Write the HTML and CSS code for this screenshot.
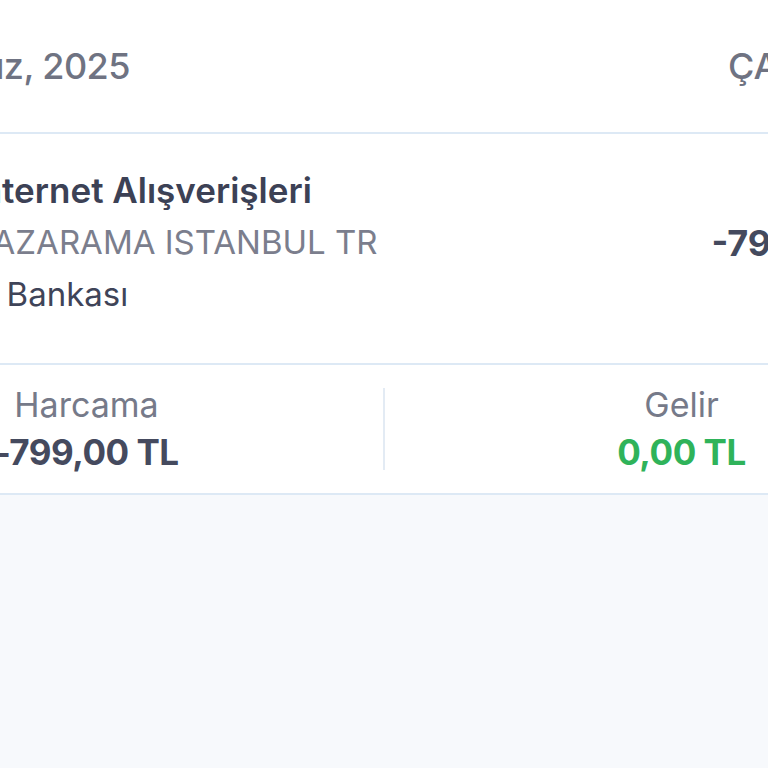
FILE: index.html
```html
<!DOCTYPE html>
<html lang="tr">
<head>
<meta charset="utf-8">
<link rel="stylesheet" href="styles.css">
</head>
<body>
<div class="screen">
  <div class="date-header">
    <span class="date">16 Temmuz, 2025</span>
    <span class="day">ÇARŞAMBA</span>
  </div>
  <div class="txn">
    <div class="txn-info">
      <div class="txn-title">İnternet Alışverişleri</div>
      <div class="txn-merchant">BAZARAMA ISTANBUL TR</div>
      <div class="txn-bank">İş Bankası</div>
    </div>
    <div class="txn-amount">-799,00 TL</div>
  </div>
  <div class="summary">
    <div class="sum-col">
      <div class="sum-label">Harcama</div>
      <div class="sum-value">-799,00 TL</div>
    </div>
    <div class="sum-divider"></div>
    <div class="sum-col">
      <div class="sum-label">Gelir</div>
      <div class="sum-value income">0,00 TL</div>
    </div>
  </div>
</div>
</body>
</html>
```
FILE: styles.css
```css
html, body {
  margin: 0;
  padding: 0;
  background: #f7f9fc;
  overflow: hidden;
  height: 768px;
}
body {
  font-family: "Inter", "Noto Sans", sans-serif;
}
.screen {
  width: 1188px;
  margin-left: -210px;
}
.date-header {
  background: #ffffff;
  border-bottom: 2px solid #dde9f5;
  display: flex;
  align-items: center;
  justify-content: space-between;
  padding: 0 45px 0 44px;
  box-sizing: border-box;
  height: 134px;
}
.date, .day {
  font-size: 36px;
  font-weight: 500;
  color: #6f7382;
}
.date {
  letter-spacing: -0.6px;
}
.txn {
  background: #ffffff;
  height: 231px;
  box-sizing: border-box;
  border-bottom: 2px solid #dde9f5;
  display: flex;
  align-items: center;
  justify-content: space-between;
  padding: 0 72px 0 181px;
}
.txn-info {
  display: flex;
  flex-direction: column;
  margin-top: -14px;
}
.txn-title {
  font-size: 35px;
  font-weight: 600;
  color: #3c4155;
  line-height: 52px;
}
.txn-merchant {
  font-size: 33px;
  color: #7b7e8d;
  line-height: 52px;
}
.txn-bank {
  font-size: 33px;
  color: #3f4458;
  line-height: 52px;
}
.txn-amount {
  font-size: 36px;
  font-weight: 700;
  color: #444a5e;
  margin-top: -12px;
}
.summary {
  background: #ffffff;
  height: 130px;
  box-sizing: border-box;
  border-bottom: 2px solid #dde9f5;
  display: flex;
  align-items: center;
}
.sum-col {
  flex: 1;
  display: flex;
  flex-direction: column;
  align-items: center;
}
.sum-divider {
  width: 2px;
  height: 82px;
  background: #e3ebf4;
}
.sum-label {
  font-size: 34px;
  color: #767a89;
  line-height: 46px;
}
.sum-value {
  font-size: 35px;
  font-weight: 700;
  color: #454a5e;
  line-height: 48px;
  letter-spacing: -0.5px;
}
.sum-value.income {
  color: #2fb35a;
}
```
